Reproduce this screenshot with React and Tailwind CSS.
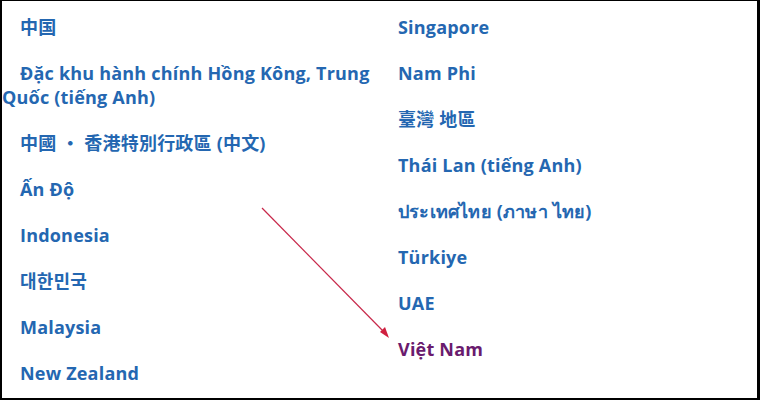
const left = [
  "中国",
  "Đặc khu hành chính Hồng Kông, Trung Quốc (tiếng Anh)",
  "中國 ・ 香港特別行政區 (中文)",
  "Ấn Độ",
  "Indonesia",
  "대한민국",
  "Malaysia",
  "New Zealand",
];

const right = [
  "Singapore",
  "Nam Phi",
  "臺灣 地區",
  "Thái Lan (tiếng Anh)",
  "ประเทศไทย (ภาษา ไทย)",
  "Türkiye",
  "UAE",
];

const Item = ({ children, active }) => (
  <li
    className={`py-[11px] indent-[18px] leading-[24px] ${
      active ? "text-[#6a1b6e]" : "text-[#2467b1]"
    }`}
  >
    {children}
  </li>
);

export default function App() {
  return (
    <div
      className="relative w-[760px] h-[400px] bg-white border-l-2 border-r-[3px] border-t border-b-2 border-black overflow-hidden"
      style={{
        fontFamily:
          '"Open Sans", "Noto Sans", "Noto Sans CJK TC", "Noto Sans CJK KR", sans-serif',
      }}
    >
      <div className="grid grid-cols-[378px_1fr] pt-[3px] text-[18px] tracking-[0.2px] font-bold">
        <ul>
          {left.map((t) => (
            <Item key={t}>{t}</Item>
          ))}
        </ul>
        <ul>
          {right.map((t) => (
            <Item key={t}>{t}</Item>
          ))}
          <Item active>Việt Nam</Item>
        </ul>
      </div>

      {/* red pointer arrow, drawn in page coordinates */}
      <svg
        className="absolute left-0 top-0 pointer-events-none"
        width="760"
        height="400"
        viewBox="2 1 760 400"
      >
        <line x1="262" y1="208" x2="384" y2="332" stroke="#c8284a" strokeWidth="1.2" />
        <polygon points="389,338 380,332 385,327" fill="#d0203f" />
      </svg>
    </div>
  );
}
